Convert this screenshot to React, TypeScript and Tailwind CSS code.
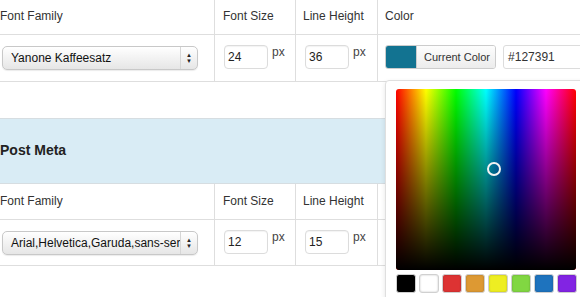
import React from 'react'

const font = { fontFamily: '"Liberation Sans", Arial, Helvetica, sans-serif' }

function Select({ value }: { value: string }) {
  return (
    <div className="flex h-[24px] w-[196px] items-stretch overflow-hidden rounded-[5px] border border-[#c8c8c8] bg-gradient-to-b from-[#ffffff] to-[#e6e6e6] shadow-[0_1px_1px_rgba(0,0,0,0.08)]">
      <span className="flex-1 overflow-hidden whitespace-nowrap pl-[8px] text-[12px] leading-[22px] text-[#111]">{value}</span>
      <span className="flex w-[17px] shrink-0 flex-col items-center justify-center border-l border-[#d6d6d6] text-[6px] leading-[6px] text-[#222]">
        <span>▲</span>
        <span>▼</span>
      </span>
    </div>
  )
}

function PxInput({ value }: { value: string }) {
  return (
    <div className="flex items-start gap-[4px]">
      <div className="h-[24px] w-[44px] rounded-[4px] border border-[#dcdcdc] bg-white pl-[3px] text-[12px] leading-[22px] text-[#222] shadow-[inset_0_1px_1px_rgba(0,0,0,0.05)]">{value}</div>
      <span className="text-[12px] leading-[14px] text-[#444]">px</span>
    </div>
  )
}

function HeaderRow({ h }: { h: string }) {
  return (
    <div className={`grid grid-cols-[215px_81px_82px_1fr] border-b border-[#dedede] text-[12px] text-[#333] ${h}`}>
      <div className="flex items-center border-r border-[#dedede] pb-[2px]">Font Family</div>
      <div className="flex items-center border-r border-[#dedede] pb-[2px] pl-[8px]">Font Size</div>
      <div className="flex items-center border-r border-[#dedede] pb-[2px] pl-[7px]">Line Height</div>
      <div className="flex items-center pb-[2px] pl-[7px]">Color</div>
    </div>
  )
}

function DataRow({ family, size, lh, h, withColor }: { family: string; size: string; lh: string; h: string; withColor?: boolean }) {
  return (
    <div className={`grid grid-cols-[215px_81px_82px_1fr] border-b border-[#dedede] ${h}`}>
      <div className="flex items-center border-r border-[#dedede] pl-[2px]">
        <Select value={family} />
      </div>
      <div className="flex items-center border-r border-[#dedede] pl-[9px] pb-[2px]">
        <PxInput value={size} />
      </div>
      <div className="flex items-center border-r border-[#dedede] pl-[9px] pb-[2px]">
        <PxInput value={lh} />
      </div>
      <div className="flex items-center overflow-hidden pl-[7px] pb-[2px]">
        {withColor && (
          <div className="flex shrink-0 items-center">
            <div className="flex h-[24px] shrink-0 overflow-hidden rounded-[3px] border border-[#cccccc]">
              <span className="w-[30px] bg-[#127391]" />
              <span className="flex items-center whitespace-nowrap border-l border-[#cccccc] bg-gradient-to-b from-[#fdfdfd] to-[#ececec] pl-[7px] pr-[5px] text-[11px] text-[#333]">Current Color</span>
            </div>
            <div className="ml-[7px] h-[24px] w-[100px] shrink-0 rounded-l-[3px] border border-[#dcdcdc] pl-[4px] text-[12px] leading-[22px] text-[#333]">#127391</div>
          </div>
        )}
      </div>
    </div>
  )
}

const swatches = ['#000000', '#ffffff', '#dd3333', '#dd9933', '#eeee22', '#81d742', '#1e73be', '#8224e3']

function Picker() {
  return (
    <div className="absolute left-[385px] top-[80px] h-[240px] w-[220px] rounded-tl-[4px] border border-[#dfdfdf] bg-white pl-[10px] pt-[8px] shadow-[0_2px_5px_rgba(0,0,0,0.1)]">
      <div className="relative h-[181px] w-[180px] overflow-hidden rounded-[3px] bg-[linear-gradient(to_right,#ff0000,#ffff00,#00ff00,#00ffff,#0000ff,#ff00ff,#ff0000)]">
        <div className="absolute inset-0 bg-gradient-to-b from-transparent to-black" />
        <div className="absolute left-[91px] top-[73px] h-[14px] w-[14px] rounded-full border-2 border-[#f2f2f2]" />
      </div>
      <div className="mt-[4px] flex gap-[3px]">
        {swatches.map(c => (
          <span
            key={c}
            className="h-[19px] w-[20px] rounded-[3px] border border-[#d0d0d0] shadow-[inset_0_0_2px_rgba(0,0,0,0.25)]"
            style={{ background: c }}
          />
        ))}
      </div>
    </div>
  )
}

export default function App() {
  return (
    <div className="relative h-[297px] w-[580px] overflow-hidden bg-white" style={font}>
      <HeaderRow h="h-[35px]" />
      <DataRow family="Yanone Kaffeesatz" size="24" lh="36" h="h-[47px]" withColor />
      <div className="h-[36px]" />
      <div className="flex h-[66px] items-center border-y border-[#d6dde1] bg-[#d9ecf5] pb-[1px] text-[14px] font-bold text-[#222]">Post Meta</div>
      <HeaderRow h="h-[36px]" />
      <DataRow family="Arial,Helvetica,Garuda,sans-serif" size="12" lh="15" h="h-[46px]" />
      <Picker />
    </div>
  )
}
